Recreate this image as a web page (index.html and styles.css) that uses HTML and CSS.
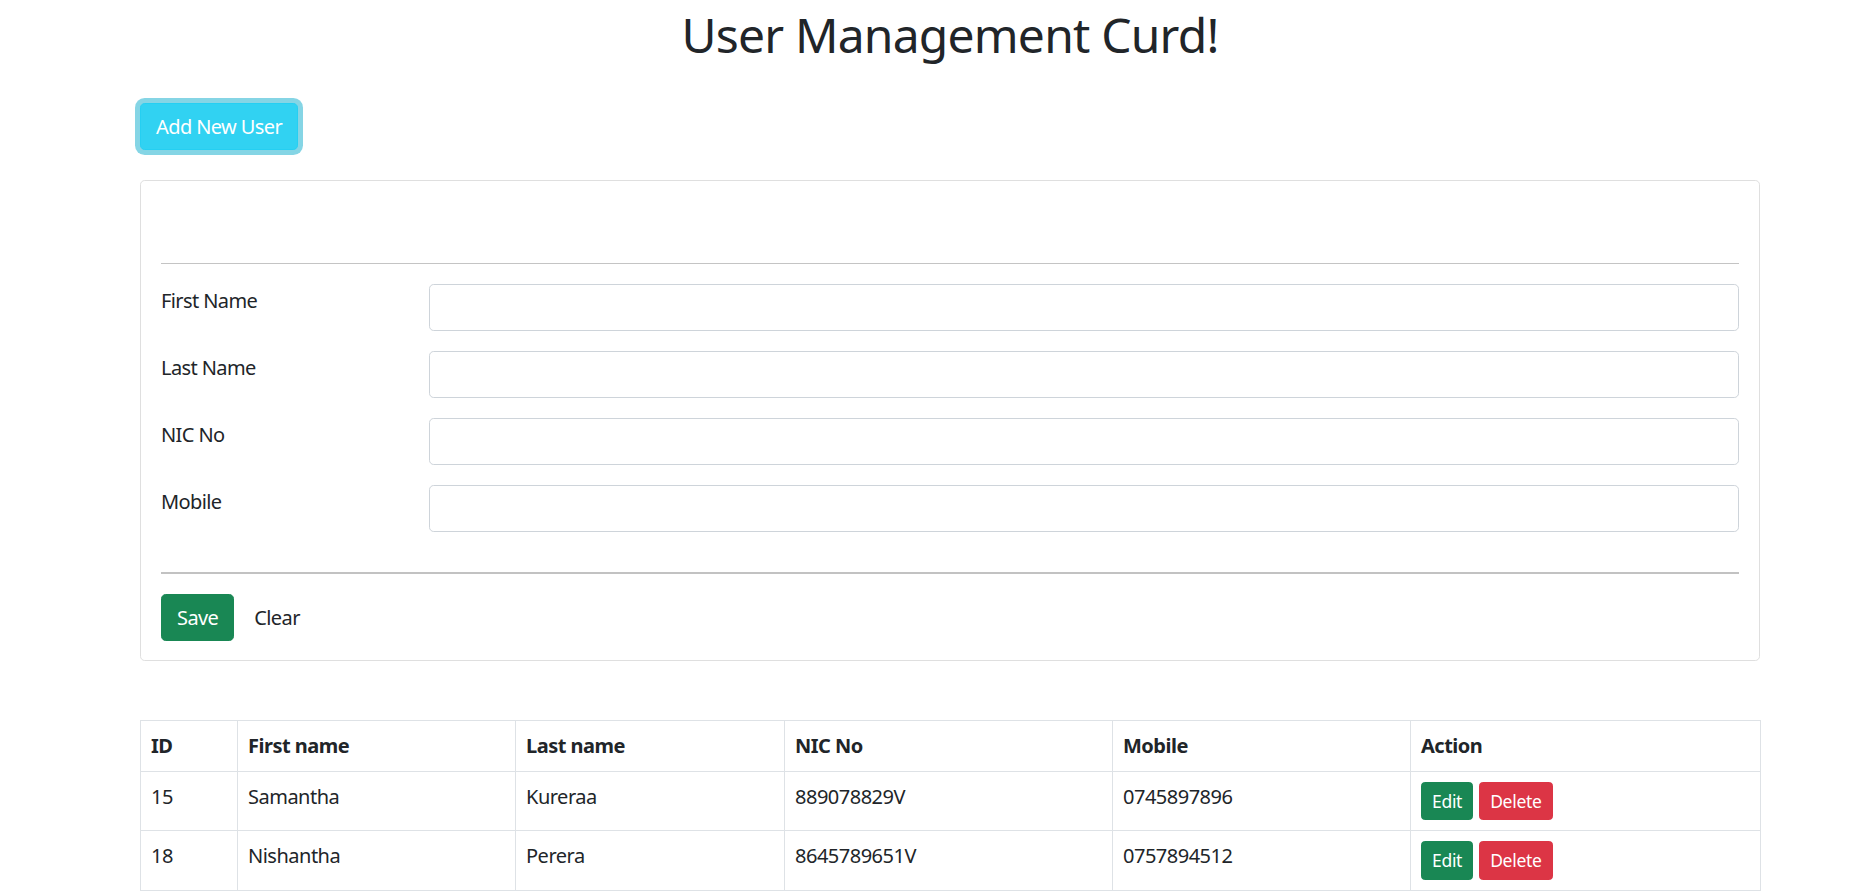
FILE: index.html
```html
<!DOCTYPE html>
<html lang="en">
<head>
<meta charset="utf-8">
<title>User Management Curd!</title>
<link rel="stylesheet" href="styles.css">
</head>
<body>
<div class="container">
  <h1 class="title">User Management Curd!</h1>
  <div class="toolbar">
    <button class="btn btn-info btn-focus" type="button">Add New User</button>
  </div>

  <div class="card">
    <div class="card-body">
      <div class="card-head"></div>
      <hr class="hr-thin">
      <div class="form-row">
        <label class="form-label">First Name</label>
        <div class="field"><input class="form-control" type="text"></div>
      </div>
      <div class="form-row">
        <label class="form-label">Last Name</label>
        <div class="field"><input class="form-control" type="text"></div>
      </div>
      <div class="form-row">
        <label class="form-label">NIC No</label>
        <div class="field"><input class="form-control" type="text"></div>
      </div>
      <div class="form-row">
        <label class="form-label">Mobile</label>
        <div class="field"><input class="form-control" type="text"></div>
      </div>
      <hr class="hr-strong">
      <div class="actions">
        <button class="btn btn-success" type="button">Save</button>
        <button class="btn btn-plain" type="button">Clear</button>
      </div>
    </div>
  </div>

  <table class="table">
    <colgroup>
      <col class="c-id"><col class="c-first"><col class="c-last"><col class="c-nic"><col class="c-mobile"><col class="c-action">
    </colgroup>
    <thead>
      <tr><th>ID</th><th>First name</th><th>Last name</th><th>NIC No</th><th>Mobile</th><th>Action</th></tr>
    </thead>
    <tbody>
      <tr>
        <td>15</td><td>Samantha</td><td>Kureraa</td><td>889078829V</td><td>0745897896</td>
        <td><div class="row-actions"><button class="btn btn-sm btn-success" type="button">Edit</button><button class="btn btn-sm btn-danger" type="button">Delete</button></div></td>
      </tr>
      <tr>
        <td>18</td><td>Nishantha</td><td>Perera</td><td>8645789651V</td><td>0757894512</td>
        <td><div class="row-actions"><button class="btn btn-sm btn-success" type="button">Edit</button><button class="btn btn-sm btn-danger" type="button">Delete</button></div></td>
      </tr>
    </tbody>
  </table>
</div>
</body>
</html>
```

FILE: styles.css
```css
* { box-sizing: border-box; }

html, body {
  margin: 0;
  padding: 0;
  background: #fff;
}

body {
  font-family: "Noto Sans", "Open Sans", sans-serif;
  font-size: 20px;
  line-height: 1.5;
  color: #212529;
}

.container {
  width: 1650px;
  margin-left: 125px;
  padding: 0 15px;
}

.title {
  margin: 0;
  padding-top: 6px;
  font-size: 48px;
  font-weight: 400;
  line-height: 58px;
  text-align: center;
  letter-spacing: -0.8px;
}

.toolbar {
  margin-top: 39px;
}

.btn {
  display: inline-block;
  font-family: inherit;
  font-size: 20px;
  line-height: 30px;
  padding: 7.5px 15px;
  border: 1px solid transparent;
  border-radius: 4.7px;
  background: transparent;
  color: #212529;
  cursor: pointer;
  vertical-align: middle;
  letter-spacing: -0.6px;
}

.btn-info {
  background: #31d2f2;
  border-color: #25cff2;
  color: #fff;
}

.btn-focus {
  box-shadow: 0 0 0 5px rgba(11, 172, 204, 0.5);
}

.btn-success {
  background: #198754;
  border-color: #198754;
  color: #fff;
}

.btn-danger {
  background: #dc3545;
  border-color: #dc3545;
  color: #fff;
}

.btn-sm {
  font-size: 17.5px;
  line-height: 26.25px;
  padding: 5px 10px;
  border-radius: 3.75px;
  letter-spacing: -0.3px;
}

.card {
  margin-top: 30px;
  border: 1px solid #dfdfdf;
  border-radius: 4.7px;
}

.card-body {
  padding: 19px 20px;
}

.card-head {
  height: 43px;
}

.hr-thin {
  margin: 20px 0;
  border: 0;
  border-top: 1px solid #c4c4c4;
}

.hr-strong {
  margin: 40px 0 20px;
  border: 0;
  border-top: 2px solid #c2c2c2;
}

.form-row {
  display: grid;
  grid-template-columns: 268px 1fr;
  margin-bottom: 20px;
}

.form-label {
  display: block;
  padding-top: 2px;
  line-height: 30px;
  letter-spacing: -0.6px;
}

.form-control {
  display: block;
  width: 100%;
  height: 47px;
  padding: 7.5px 15px;
  font-family: inherit;
  font-size: 20px;
  color: #212529;
  background: #fff;
  border: 1px solid #ced4da;
  border-radius: 4.7px;
}

.actions {
  display: flex;
  align-items: center;
  gap: 4px;
}

.table {
  margin-top: 59px;
  width: 1620px;
  border-collapse: collapse;
  table-layout: fixed;
}

.c-id { width: 97px; }
.c-first { width: 278px; }
.c-last { width: 269px; }
.c-nic { width: 328px; }
.c-mobile { width: 298px; }
.c-action { width: 350px; }

.table th,
.table td {
  border: 1px solid #dee2e6;
  padding: 10px 10px;
  text-align: left;
  vertical-align: top;
  line-height: 30px;
  letter-spacing: -0.5px;
}

.table th {
  font-weight: 700;
}

.row-actions {
  display: flex;
  gap: 6px;
}
```
